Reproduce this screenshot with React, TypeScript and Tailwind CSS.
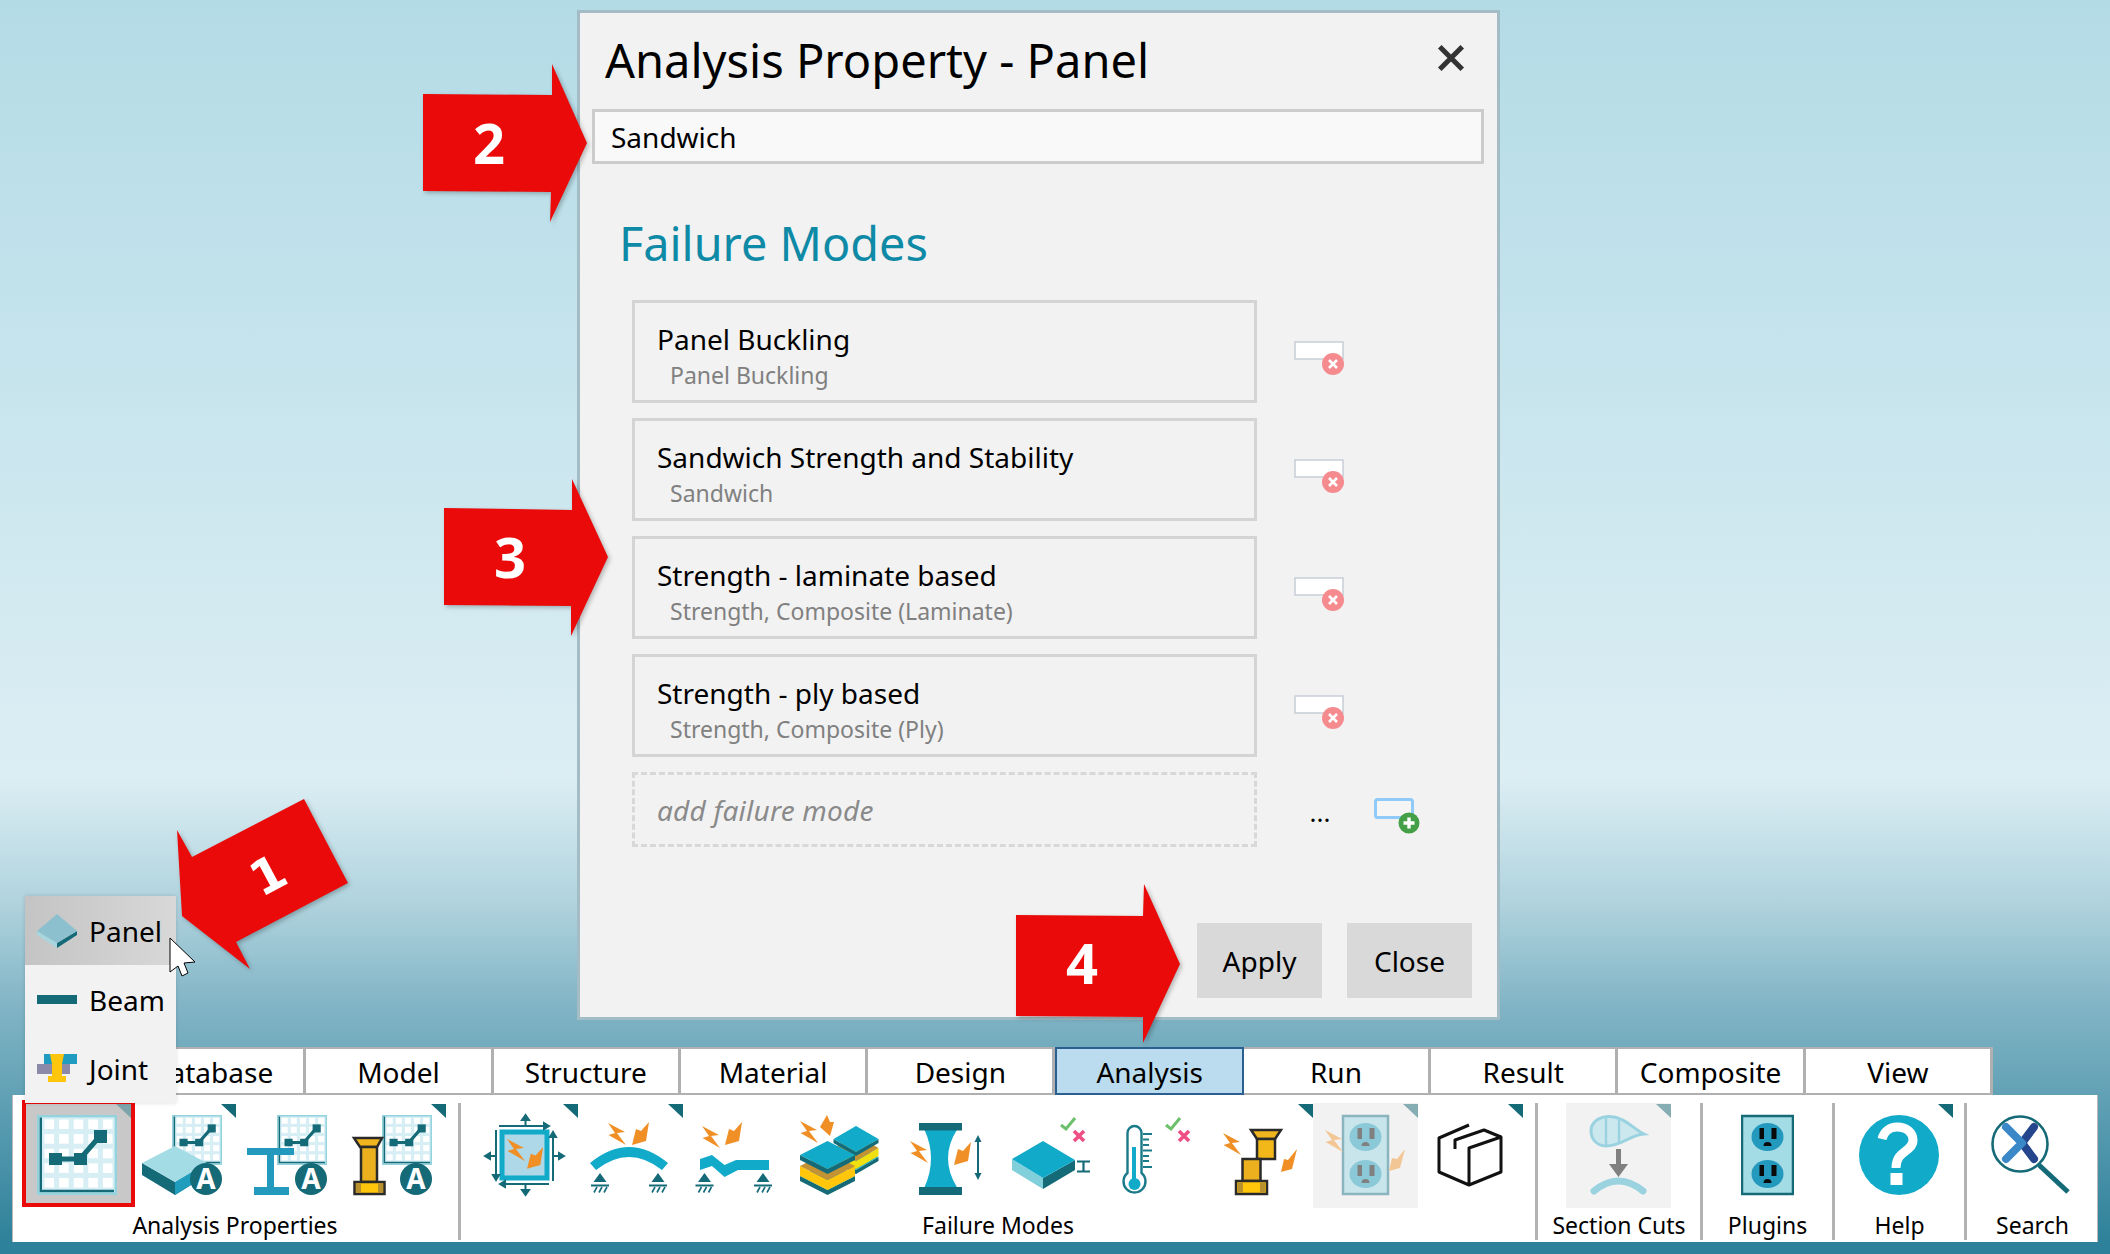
import React from "react";

const TEAL = "#156a77";
const CY = "#11aac9";
const OR = "#ef8f26";
const FONT = "Noto Sans, sans-serif";

const Tri = ({ x, y = 1104, c = TEAL }: { x: number; y?: number; c?: string }) => (
  <polygon points={`${x},${y} ${x + 15},${y} ${x + 15},${y + 14}`} fill={c} />
);
const BoltA = ({ x, y, s = 1, c = OR }: { x: number; y: number; s?: number; c?: string }) => (
  <polygon transform={`translate(${x} ${y}) scale(${s})`} points="0,0 17,9 9,10 18,22 0.5,12 7,10" fill={c} />
);
const BoltB = ({ x, y, s = 1, c = OR }: { x: number; y: number; s?: number; c?: string }) => (
  <polygon transform={`translate(${x} ${y}) scale(${s})`} points="17,0 14,19 0,23 4,7 9,9" fill={c} />
);
const Chart = ({ x, y, s = 1 }: { x: number; y: number; s?: number }) => (
  <g transform={`translate(${x} ${y}) scale(${s})`}>
    <rect width="80" height="80" fill="#93d3de" />
    <rect x="2.4" y="2.4" width="75.2" height="75.2" fill="#d6eef4" />
    {[0, 1, 2, 3, 4].map((r) =>
      [0, 1, 2, 3, 4].map((c) => <rect key={`${r}${c}`} x={7.5 + c * 14.6} y={4.5 + r * 14.6} width="9.6" height="9.6" fill="#fff" />)
    )}
    <path d="M3.8 2.4V76H77" fill="none" stroke={TEAL} strokeWidth="2.4" />
    <polyline points="18,44 43,44 63,21" fill="none" stroke={TEAL} strokeWidth="5" />
    <rect x="12" y="38" width="13" height="12" fill={TEAL} />
    <rect x="37" y="38" width="13" height="12" fill={TEAL} />
    <rect x="57" y="15" width="13" height="13" fill={TEAL} />
  </g>
);
const ACircle = ({ cx }: { cx: number }) => (
  <g>
    <circle cx={cx} cy="1179" r="16" fill={TEAL} />
    <text x={cx} y="1189" textAnchor="middle" fontSize="28" fontWeight="700" fill="#fff" fontFamily={FONT}>A</text>
  </g>
);
const Support = ({ cx }: { cx: number }) => (
  <g>
    <polygon points={`${cx - 6.5},1182 ${cx},1173 ${cx + 6.5},1182`} fill={TEAL} />
    <rect x={cx - 9} y="1184.5" width="18" height="2" fill={TEAL} />
    {[0, 1, 2].map((i) => (
      <line key={i} x1={cx - 3 + i * 5} y1="1187" x2={cx - 6 + i * 5} y2="1192.5" stroke={TEAL} strokeWidth="1.6" />
    ))}
  </g>
);
const Slab = ({ cx, y, hw, hh, t, top, side }: { cx: number; y: number; hw: number; hh: number; t: number; top: string; side: string }) => (
  <g>
    <polygon points={`${cx - hw},${y} ${cx},${y + hh} ${cx + hw},${y} ${cx + hw},${y + t} ${cx},${y + hh + t} ${cx - hw},${y + t}`} fill={side} />
    <polygon points={`${cx - hw},${y} ${cx},${y - hh} ${cx + hw},${y} ${cx},${y + hh}`} fill={top} />
  </g>
);
const CheckX = ({ x, y }: { x: number; y: number }) => (
  <g>
    <polyline points={`${x},${y + 7} ${x + 5},${y + 11} ${x + 14},${y}`} fill="none" stroke="#6cbf6c" strokeWidth="3" />
    <path d={`M${x + 13} ${y + 13}L${x + 23} ${y + 23}M${x + 23} ${y + 13}L${x + 13} ${y + 23}`} stroke="#ee4f86" strokeWidth="3.6" />
  </g>
);
const Column = () => (
  <g>
    <polygon points="354,1138 382,1138 377,1147 360,1147" fill="#f0b41e" stroke="#2a2a2a" strokeWidth="2.5" />
    <rect x="361" y="1147" width="16" height="35" fill="#ecb01e" stroke="#2a2a2a" strokeWidth="2.5" />
    <rect x="354.5" y="1182" width="30" height="12" fill="#ffc60b" stroke="#2a2a2a" strokeWidth="2.5" />
    <rect x="356" y="1183" width="5" height="10" fill="#b8912e" />
    <rect x="378" y="1183" width="5" height="10" fill="#b8912e" />
  </g>
);
const Outlet = ({ x, w, plate, border, sock, slot }: { x: number; w: number; plate: string; border: string; sock: string; slot: string }) => {
  const cx = x + w / 2;
  return (
    <g>
      <rect x={x + 1} y="1116" width={w - 2} height="78" fill={plate} stroke={border} strokeWidth="2.5" />
      {[1137, 1174].map((cy) => (
        <g key={cy}>
          <ellipse cx={cx} cy={cy} rx="16" ry="14" fill={sock} />
          <rect x={cx - 8} y={cy - 9} width="4.5" height="11" fill={slot} />
          <rect x={cx + 4} y={cy - 9} width="5" height="11" fill={slot} />
          <path d={`M${cx - 4} ${cy + 9}a4 4 0 0 1 8 0z`} fill={slot} />
        </g>
      ))}
    </g>
  );
};

const Btn = ({ x, w, children }: { x: number; w: number; children?: React.ReactNode }) => (
  <svg viewBox={`${x} 1100 ${w} 108`} width={w} height={108} className="block shrink-0">
    {children}
  </svg>
);

const Divider = () => <div className="w-[3px] h-[137px] mt-[8px] bg-[#b3b3b3] shrink-0" />;

const Group = ({ w, label, pl, children }: { w: string; label: string; pl?: string; children: React.ReactNode }) => (
  <div className={`${w} h-full flex flex-col shrink-0`}>
    <div className={`flex h-[108px] mt-[5px] ${pl ?? ""}`}>{children}</div>
    <div className="h-[34px] leading-[34px] text-center text-[23px] text-black whitespace-nowrap">{label}</div>
  </div>
);

const tabs = ["Database", "Model", "Structure", "Material", "Design", "Analysis", "Run", "Result", "Composite", "View"];
const modes = [
  ["Panel Buckling", "Panel Buckling"],
  ["Sandwich Strength and Stability", "Sandwich"],
  ["Strength - laminate based", "Strength, Composite (Laminate)"],
  ["Strength - ply based", "Strength, Composite (Ply)"],
];

const Annot = ({ x, y, w, h, pts, num, tx, ty, rot = 0, fs = 56, ff = "Open Sans, sans-serif" }: { x: number; y: number; w: number; h: number; pts: string; num: string; tx: number; ty: number; rot?: number; fs?: number; ff?: string }) => (
  <svg
    viewBox={`${x} ${y} ${w} ${h}`}
    width={w}
    height={h}
    style={{ left: x, top: y }}
    className="absolute overflow-visible drop-shadow-[2px_2px_2px_rgba(0,0,0,0.25)] pointer-events-none"
  >
    <polygon points={pts} fill="#ea0a0a" />
    <text
      x={tx}
      y={ty}
      transform={`rotate(${rot} ${tx} ${ty})`}
      textAnchor="middle"
      dominantBaseline="central"
      fontSize={fs}
      fontWeight="700"
      fill="#fff"
      fontFamily={ff}
    >
      {num}
    </text>
  </svg>
);

export default function App() {
  return (
    <div className="relative w-[2110px] h-[1254px] overflow-hidden flex flex-col font-['Noto_Sans',sans-serif] text-black bg-[linear-gradient(180deg,#b3dbe6_0%,#dceef4_62%,#b0d3de_72%,#82b5c6_80%,#2e819a_99%)]">
      {/* Dialog */}
      <div className="mt-[10px] ml-[577px] w-[923px] h-[1010px] shrink-0 border-[3px] border-[#a3bcc5] bg-[#f2f2f2] flex flex-col">
        <div className="h-[96px] flex items-center justify-between pl-[25px] pr-[31px] pb-[2px] shrink-0">
          <span className="text-[47px] leading-none whitespace-nowrap">Analysis Property - Panel</span>
          <svg viewBox="0 0 24 24" className="w-[30px] h-[30px] mb-[4px]">
            <path d="M3 3L21 21M21 3L3 21" stroke="#333" strokeWidth="4" />
          </svg>
        </div>
        <div className="ml-[12px] w-[892px] h-[55px] shrink-0 border-[3px] border-[#cccccc] bg-[#f9f9f9] flex items-center pl-[16px] text-[28px]">Sandwich</div>
        <div className="mt-[49px] ml-[39px] h-[60px] shrink-0 leading-[60px] text-[46.8px] text-[#0e8aa6] whitespace-nowrap">Failure Modes</div>
        <div className="mt-[27px] ml-[52px] flex flex-col gap-[15px]">
          {modes.map(([a, b]) => (
            <div key={a} className="flex items-start">
              <div className="w-[625px] h-[103px] border-[3px] border-[#d4d4d4] pl-[22px] pt-[18px] flex flex-col shrink-0">
                <span className="text-[28px] leading-[36px] whitespace-nowrap">{a}</span>
                <span className="pl-[13px] text-[23px] leading-[32px] text-[#808080] whitespace-nowrap mt-[2px]">{b}</span>
              </div>
              <svg viewBox="1294 341 52 36" className="w-[52px] h-[36px] ml-[37px] mt-[41px]">
                <rect x="1295" y="342" width="48" height="17" fill="#fff" stroke="#c6ced6" strokeWidth="1.5" />
                <circle cx="1333" cy="364" r="11" fill="#f58b8e" />
                <path d="M1329 360L1337 368M1337 360L1329 368" stroke="#fff" strokeWidth="2.6" />
              </svg>
            </div>
          ))}
          <div className="flex items-start">
            <div className="w-[625px] h-[75px] border-[3px] border-dashed border-[#d8d8d8] flex items-center pl-[22px] text-[28px] italic text-[#8a8a8a] tracking-[0.2px] shrink-0">add failure mode</div>
            <span className="ml-[51px] w-[24px] mt-[22px] text-center text-[26px] leading-[36px]">...</span>
            <svg viewBox="1373 797 48 38" className="w-[48px] h-[38px] ml-[41px] mt-[25px]">
              <rect x="1375.5" y="799.5" width="37" height="18" rx="2" fill="#f5f5f5" stroke="#90caf9" strokeWidth="3" />
              <circle cx="1409" cy="823" r="10.5" fill="#43a047" />
              <path d="M1409 817.5V828.5M1403.5 823H1414.5" stroke="#fff" strokeWidth="3.4" />
            </svg>
          </div>
        </div>
        <div className="mt-auto flex justify-end gap-[25px] pr-[25px] pb-[19px]">
          <div className="w-[125px] h-[75px] bg-[#d9d9d9] flex items-center justify-center text-[28px]">Apply</div>
          <div className="w-[125px] h-[75px] bg-[#d9d9d9] flex items-center justify-center text-[28px]">Close</div>
        </div>
      </div>

      {/* Tabs */}
      <div className="mt-[27px] ml-[119px] w-[1874px] h-[48px] flex shrink-0">
        {tabs.map((t) =>
          t === "Analysis" ? (
            <div key={t} className="flex-1 bg-[#bbdcee] border-2 border-[#2a5f8f] flex items-center justify-center pt-[1px] text-[28px]">{t}</div>
          ) : (
            <div key={t} className="flex-1 bg-white border-y-2 border-r-[3px] border-[#b0b0b0] flex items-center justify-center pt-[1px] text-[28px]">{t}</div>
          )
        )}
      </div>

      {/* Ribbon */}
      <div className="ml-[12px] w-[2086px] h-[147px] bg-white flex shrink-0 shadow-[inset_1px_0_#b8b8b8,inset_-1px_0_#b8b8b8]">
        <Group w="w-[446px]" label="Analysis Properties">
          <div className="ml-[10px] w-[113px] h-[107px] border-4 border-[#ea0a0a] bg-[#c8c8c8] shrink-0">
            <svg viewBox="26 1104 105 99" width="105" height="99" className="block">
              <Chart x={37} y={1115} />
              <Tri x={116} y={1104} c="#7da4ab" />
            </svg>
          </div>
          <Btn x={135} w={105}>
            <Chart x={172} y={1115} s={0.625} />
            <polygon points="142,1163 142,1175 175,1195 207,1175 207,1163 175,1182" fill={TEAL} />
            <polygon points="175,1182 207,1163 207,1175 175,1195" fill="#209cbd" />
            <polygon points="142,1163 175,1146 207,1163 175,1182" fill="#a4dce6" />
            <ACircle cx={206} />
            <Tri x={221} />
          </Btn>
          <Btn x={240} w={105}>
            <Chart x={277} y={1115} s={0.625} />
            <rect x="247" y="1148" width="47" height="7" fill="#2299bd" />
            <rect x="267" y="1155" width="7" height="33" fill="#2299bd" />
            <rect x="254" y="1187" width="35" height="8" fill="#2299bd" />
            <ACircle cx={311} />
          </Btn>
          <Btn x={345} w={105}>
            <Chart x={382} y={1115} s={0.625} />
            <Column />
            <ACircle cx={416} />
            <Tri x={431} />
          </Btn>
        </Group>
        <Divider />
        <Group w="w-[1074px]" label="Failure Modes" pl="pl-[17px]">
          <Btn x={478} w={102}>
            <rect x="502" y="1132" width="45" height="46" fill="#aed8e8" stroke={CY} strokeWidth="5" />
            <g stroke={TEAL} strokeWidth="2" fill={TEAL}>
              <line x1="499" y1="1126" x2="546" y2="1126" />
              <polygon points="549,1126 544,1123 544,1129" />
              <line x1="553" y1="1135" x2="553" y2="1181" />
              <polygon points="553,1132 550,1137 556,1137" />
              <line x1="503" y1="1184" x2="549" y2="1184" />
              <polygon points="500,1184 505,1181 505,1187" />
              <line x1="496" y1="1130" x2="496" y2="1176" />
              <polygon points="496,1180 493,1175 499,1175" />
              <line x1="525.5" y1="1118" x2="525.5" y2="1126" />
              <polygon points="525.5,1115 522,1120 529,1120" />
              <line x1="553" y1="1156" x2="561" y2="1156" />
              <polygon points="564,1156 559,1153 559,1159" />
              <line x1="525.5" y1="1184" x2="525.5" y2="1192" />
              <polygon points="525.5,1195 522,1190 529,1190" />
              <line x1="488" y1="1156" x2="496" y2="1156" />
              <polygon points="485,1156 490,1153 490,1159" />
            </g>
            <BoltA x={507} y={1139} />
            <BoltB x={527} y={1147} s={0.95} />
            <Tri x={563} />
          </Btn>
          <Btn x={580} w={104}>
            <path d="M590 1163Q629 1131 668 1163L662 1170Q629 1144 596 1170Z" fill={CY} />
            <BoltA x={608} y={1123} />
            <BoltB x={632} y={1122} />
            <Support cx={600} />
            <Support cx={658} />
            <Tri x={668} />
          </Btn>
          <Btn x={684} w={106}>
            <polygon points="700,1159 712,1155 724.5,1165 736,1160 769,1160 769,1170 738,1170 724.5,1177 712,1166 700,1170" fill={CY} />
            <BoltA x={702} y={1126} />
            <BoltB x={725} y={1122} />
            <Support cx={704.5} />
            <Support cx={763} />
          </Btn>
          <Btn x={790} w={105}>
            <Slab cx={856} y={1157} hw={22.5} hh={13} t={4} top={CY} side={TEAL} />
            <Slab cx={856} y={1148} hw={22.5} hh={13} t={8} top="#c39234" side="#f0e010" />
            <Slab cx={856} y={1139} hw={22.5} hh={13} t={4} top={CY} side={TEAL} />
            <Slab cx={827.5} y={1176} hw={27.5} hh={14} t={5} top={CY} side={TEAL} />
            <Slab cx={827.5} y={1166} hw={27.5} hh={14} t={10} top="#c39234" side="#ffc60b" />
            <Slab cx={827.5} y={1155} hw={27.5} hh={14} t={5} top={CY} side={TEAL} />
            <BoltA x={800} y={1121} />
            <polygon points="820,1127 827,1115 830,1122 834,1122 830,1136" fill={OR} />
          </Btn>
          <Btn x={895} w={105}>
            <path d="M924.6 1130Q937.4 1158 924.6 1187H956.8Q939.2 1158 956.8 1130Z" fill={CY} />
            <rect x="919" y="1123" width="43" height="7.5" fill={TEAL} />
            <rect x="919" y="1187" width="43" height="8" fill={TEAL} />
            <BoltA x={910} y={1141} />
            <BoltB x={954} y={1142} />
            <g fill={TEAL}>
              <rect x="977" y="1138" width="2" height="40" />
              <polygon points="978,1135 974.5,1142 981.5,1142" />
              <polygon points="978,1180 974.5,1173 981.5,1173" />
            </g>
          </Btn>
          <Btn x={1000} w={105}>
            <polygon points="1012,1159 1043,1178 1043,1189 1012,1170" fill="#82cfdc" />
            <polygon points="1043,1178 1075,1160 1075,1170 1043,1189" fill={TEAL} />
            <polygon points="1012,1159 1043,1141 1075,1160 1043,1178" fill={CY} />
            <path d="M1077 1161.5H1090M1077 1171.5H1090M1083.5 1161.5V1171.5" stroke={TEAL} strokeWidth="2.2" fill="none" />
            <CheckX x={1061} y={1118} />
          </Btn>
          <Btn x={1105} w={103}>
            <path d="M1127.5 1173V1133a7 7 0 0 1 14 0V1173a11 11 0 1 1-14 0Z" fill="#fff" stroke="#1a7a8a" strokeWidth="2.4" />
            <rect x="1132" y="1147" width="4" height="32" fill={CY} />
            <circle cx="1134.5" cy="1184" r="6" fill={CY} />
            {[1134, 1139.5, 1145, 1150.5, 1156, 1161, 1167].map((y, i) => (
              <rect key={y} x="1143" y={y - 1} width={i % 3 === 0 ? 9 : 6} height="2" fill="#1a7a8a" />
            ))}
            <CheckX x={1166} y={1118} />
          </Btn>
          <Btn x={1208} w={105}>
            <polygon points="1251,1130 1281,1130 1275,1139 1257,1139" fill="#f0b41e" stroke="#2a2a2a" strokeWidth="2.5" />
            <rect x="1257" y="1139" width="18" height="20" fill="#f2b81a" stroke="#2a2a2a" strokeWidth="2.5" />
            <rect x="1242.5" y="1159" width="18" height="22" fill="#ecb01e" stroke="#2a2a2a" strokeWidth="2.5" />
            <rect x="1236" y="1181" width="31" height="13" fill="#ffc60b" stroke="#2a2a2a" strokeWidth="2.5" />
            <rect x="1238" y="1182.5" width="5" height="10" fill="#b8912e" />
            <rect x="1260" y="1182.5" width="5" height="10" fill="#b8912e" />
            <BoltA x={1223} y={1133} />
            <polygon points="1297,1149 1292,1169 1281,1172 1284,1159 1288,1160" fill={OR} />
            <Tri x={1298} />
          </Btn>
          <Btn x={1313} w={105}>
            <rect x="1313" y="1103" width="105" height="105" fill="#f2f2f2" />
            <Outlet x={1342} w={47} plate="#c8e5ec" border="#8ab5bf" sock="#8bc9d9" slot="#808080" />
            <BoltA x={1325} y={1130} c="#f3c795" />
            <polygon points="1405,1149 1400,1168 1389,1171 1392,1158 1397,1159" fill="#f3c795" />
            <Tri x={1403} c="#86adb3" />
          </Btn>
          <Btn x={1418} w={112}>
            <path d="M1469 1125L1439 1138V1172L1469 1185L1501 1172V1137L1469 1148V1185" fill="none" stroke="#111" strokeWidth="3" strokeLinejoin="round" />
            <path d="M1455 1149V1140L1484 1130L1501 1137" fill="none" stroke="#111" strokeWidth="3" strokeLinejoin="round" />
            <Tri x={1508} />
          </Btn>
        </Group>
        <Divider />
        <Group w="w-[162px]" label="Section Cuts" pl="pl-[28px]">
          <Btn x={1566} w={105}>
            <rect x="1566" y="1103" width="105" height="105" fill="#f2f2f2" />
            <path d="M1608 1116.5C1624 1116 1632 1128 1644 1134C1630 1135 1622 1146 1606 1146C1596 1146 1591 1138 1591 1131C1591 1123 1598 1117 1608 1116.5Z" fill="#cce8ef" stroke="#9ad2e0" strokeWidth="3" />
            <path d="M1606 1117V1146M1619 1119V1142" stroke="#9ad2e0" strokeWidth="2.4" />
            <rect x="1616" y="1149" width="5" height="16" fill="#808080" />
            <polygon points="1609,1164 1628,1164 1618.5,1177" fill="#808080" />
            <path d="M1594 1191Q1618.5 1171 1643 1191" fill="none" stroke="#9ad2e0" strokeWidth="7" strokeLinecap="round" />
            <Tri x={1656} c="#86adb3" />
          </Btn>
        </Group>
        <Divider />
        <Group w="w-[129px]" label="Plugins" pl="pl-[38px]">
          <Btn x={1741} w={53}>
            <Outlet x={1741} w={53} plate="#a4dce6" border={TEAL} sock="#2299bd" slot="#0a0a0a" />
          </Btn>
        </Group>
        <Divider />
        <Group w="w-[129px]" label="Help" pl="pl-[24px]">
          <Btn x={1859} w={95}>
            <circle cx="1899" cy="1155" r="40" fill={CY} />
            <path d="M1882 1139C1884 1131 1890 1127 1897 1127C1907 1127 1913 1133 1913 1140C1913 1152 1896 1150 1896 1168" fill="none" stroke="#fff" strokeWidth="9" />
            <rect x="1890.5" y="1173" width="12" height="12" fill="#fff" />
            <Tri x={1938} />
          </Btn>
        </Group>
        <Divider />
        <Group w="w-[131px]" label="Search" pl="pl-[22px]">
          <Btn x={1989} w={90}>
            <circle cx="2020" cy="1144" r="27.5" fill="#fff" stroke={TEAL} strokeWidth="2.6" />
            <path d="M2039 1165L2068 1192" stroke={TEAL} strokeWidth="5" />
            <path d="M2034 1127L2022 1143L2034 1159" fill="none" stroke="#25468c" strokeWidth="8" strokeLinecap="round" strokeLinejoin="round" />
            <path d="M2006 1127L2022 1143L2006 1159" fill="none" stroke="#3a88c8" strokeWidth="8" strokeLinecap="round" strokeLinejoin="round" />
          </Btn>
        </Group>
      </div>

      {/* Split-button menu over the ribbon */}
      <div className="absolute left-[25px] top-[896px] w-[151px] h-[207px] bg-[#f2f2f2] flex flex-col text-[28px] shadow-[0_0_4px_rgba(0,0,0,0.15)]">
        <div className="h-[69px] flex items-center bg-[linear-gradient(90deg,#c4c4c4,#d8d8d8)]">
          <svg viewBox="37 912 40 36" className="ml-[12px] w-[40px] h-[36px]">
            <polygon points="37,930 57,942 57,947 37,934" fill="#a9d5df" />
            <polygon points="57,942 77,930 77,934 57,947" fill={TEAL} />
            <polygon points="37,930 57,913 77,930 57,942" fill="#8dc0cf" />
          </svg>
          <span className="ml-[12px]">Panel</span>
        </div>
        <div className="h-[69px] flex items-center">
          <div className="ml-[12px] w-[40px] h-[9px] bg-[#156a77]" />
          <span className="ml-[12px]">Beam</span>
        </div>
        <div className="h-[69px] flex items-center">
          <svg viewBox="37 1058 40 30" className="ml-[12px] w-[40px] h-[30px]">
            <rect x="44" y="1058" width="33" height="10" fill="#1f9cc0" />
            <rect x="37" y="1068" width="33" height="10" fill="#8b8aa8" />
            <polygon points="50,1058 64,1058 62,1068 62,1080 66,1080 66,1086 48,1086 48,1080 52,1080 52,1068" fill="#ffc60b" />
          </svg>
          <span className="ml-[12px]">Joint</span>
        </div>
      </div>

      {/* Mouse pointer */}
      <svg viewBox="169 937 28 41" className="absolute left-[169px] top-[937px] w-[28px] h-[41px]">
        <polygon points="170,938 195,962 184,963 188,973 182,976 178,966 170,972" fill="#fff" stroke="#000" strokeWidth="1" />
      </svg>

      {/* Numbered callouts */}
      <Annot x={177} y={799} w={171} h={170} pts="304,799 348,883 236,942 250,969 182,916 177,830 192,857" num="1" tx={268} ty={875} rot={-28} fs={48} ff="DejaVu Sans, sans-serif" />
      <Annot x={423} y={64} w={164} h={158} pts="423,94 552,95 552,64 587,143 550,222 551,192 423,191" num="2" tx={489} ty={142} />
      <Annot x={444} y={479} w={164} h={157} pts="444,508 572,510 572,479 608,557 571,636 571,606 444,605" num="3" tx={510} ty={556} />
      <Annot x={1016} y={884} w={164} h={159} pts="1016,915 1143,916 1144,884 1180,964 1143,1043 1143,1017 1016,1016" num="4" tx={1082} ty={962} />
    </div>
  );
}
